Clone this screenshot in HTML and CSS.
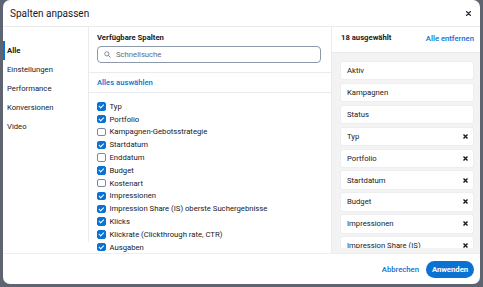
FILE: index.html
```html
<!DOCTYPE html>
<html lang="de">
<head>
    <meta charset="UTF-8">
    <title>Spalten anpassen</title>
    <link rel="stylesheet" href="styles.css">
</head>
<body>
    <div class="modal">
        <div class="modal_head">
            <span class="title">Spalten anpassen</span>
            <svg class="close" width="5" height="5" viewBox="0 0 10 10"><path d="M1 1l8 8M9 1l-8 8" stroke="#2a2e33" stroke-width="2.2" stroke-linecap="round"/></svg>
        </div>
        <div class="modal_body">
            <div class="nav">
                <div class="nav_item active">Alle</div>
                <div class="nav_item">Einstellungen</div>
                <div class="nav_item">Performance</div>
                <div class="nav_item">Konversionen</div>
                <div class="nav_item">Video</div>
            </div>
            <div class="available">
                <div class="avail_head">
                    <div class="label">Verfügbare Spalten</div>
                    <div class="search">
                        <svg width="7" height="7" viewBox="0 0 16 16"><circle cx="6.5" cy="6.5" r="4.8" fill="none" stroke="#7d8998" stroke-width="2.2"/><path d="M10 10l4.5 4.5" stroke="#7d8998" stroke-width="2.2" stroke-linecap="round"/></svg>
                        <span>Schnellsuche</span>
                    </div>
                </div>
                <div class="select_all">Alles auswählen</div>
                <div class="check_list">
                    <div class="check_row"><span class="box on"></span>Typ</div>
                    <div class="check_row"><span class="box on"></span>Portfolio</div>
                    <div class="check_row"><span class="box"></span>Kampagnen-Gebotsstrategie</div>
                    <div class="check_row"><span class="box on"></span>Startdatum</div>
                    <div class="check_row"><span class="box"></span>Enddatum</div>
                    <div class="check_row"><span class="box on"></span>Budget</div>
                    <div class="check_row"><span class="box"></span>Kostenart</div>
                    <div class="check_row"><span class="box on"></span>Impressionen</div>
                    <div class="check_row"><span class="box on"></span>Impression Share (IS) oberste Suchergebnisse</div>
                    <div class="check_row"><span class="box on"></span>Klicks</div>
                    <div class="check_row"><span class="box on"></span>Klickrate (Clickthrough rate, CTR)</div>
                    <div class="check_row"><span class="box on"></span>Ausgaben</div>
                </div>
            </div>
            <div class="selected">
                <div class="sel_head">
                    <span class="label">18 ausgewählt</span>
                    <span class="link">Alle entfernen</span>
                </div>
                <div class="sel_list">
                    <div class="card">Aktiv</div>
                    <div class="card">Kampagnen</div>
                    <div class="card">Status</div>
                    <div class="card">Typ <svg class="x" width="5" height="5" viewBox="0 0 10 10"><path d="M1 1l8 8M9 1l-8 8" stroke="#16191f" stroke-width="2.8"/></svg></div>
                    <div class="card">Portfolio <svg class="x" width="5" height="5" viewBox="0 0 10 10"><path d="M1 1l8 8M9 1l-8 8" stroke="#16191f" stroke-width="2.8"/></svg></div>
                    <div class="card">Startdatum <svg class="x" width="5" height="5" viewBox="0 0 10 10"><path d="M1 1l8 8M9 1l-8 8" stroke="#16191f" stroke-width="2.8"/></svg></div>
                    <div class="card">Budget <svg class="x" width="5" height="5" viewBox="0 0 10 10"><path d="M1 1l8 8M9 1l-8 8" stroke="#16191f" stroke-width="2.8"/></svg></div>
                    <div class="card">Impressionen <svg class="x" width="5" height="5" viewBox="0 0 10 10"><path d="M1 1l8 8M9 1l-8 8" stroke="#16191f" stroke-width="2.8"/></svg></div>
                    <div class="card">Impression Share (IS) <svg class="x" width="5" height="5" viewBox="0 0 10 10"><path d="M1 1l8 8M9 1l-8 8" stroke="#16191f" stroke-width="2.8"/></svg></div>
                </div>
            </div>
        </div>
        <div class="modal_foot">
            <span class="link">Abbrechen</span>
            <button class="apply">Anwenden</button>
        </div>
    </div>
</body>
</html>
```

FILE: styles.css
```css
body { margin: 0; background: #5e6570; font-family: Roboto, sans-serif; font-size: 7.7px; color: #16191f; }
.modal { margin: 0 3px; width: 477px; height: 284px; background: #fff; border-radius: 7px; display: flex; flex-direction: column; overflow: hidden; }
.modal_head { height: 26px; flex: none; display: flex; align-items: center; justify-content: space-between; padding: 0 9px 0 7px; border-bottom: 1px solid #e9ebed; }
.title { font-size: 10px; }
.modal_body { height: 226px; flex: none; display: grid; grid-template-columns: 86px 243px 1fr; border-bottom: 1px solid #eceeef; }
.nav { padding-top: 14px; border-right: 1px solid #e9ebed; margin-bottom: 11px; }
.nav_item { height: 19px; line-height: 19px; padding-left: 2px; border-left: 2px solid transparent; white-space: nowrap; }
.nav_item.active { font-weight: 700; border-left-color: #0972d3; }
.available { display: flex; flex-direction: column; overflow: hidden; border-right: 1px solid #e9ebed; }
.avail_head { padding: 6px 10px 9px 8px; border-bottom: 1px solid #e9ebed; }
.label { font-weight: 700; white-space: nowrap; line-height: 10px; }
.search { margin-top: 3px; height: 15px; border: 1px solid #8d99a8; border-radius: 4px; display: flex; align-items: center; gap: 5px; padding-left: 6px; color: #5f6b7a; }
.select_all { height: 19px; line-height: 19px; padding-left: 8px; color: #0972d3; font-weight: 500; border-bottom: 1px solid #e9ebed; }
.check_list { padding: 7px 0 0 8px; }
.check_row { height: 12.8px; display: flex; align-items: center; gap: 4px; white-space: nowrap; }
.box { width: 6.5px; height: 6.5px; border: 1px solid #7d8998; border-radius: 2px; flex: none; }
.box.on { background: #0972d3; border-color: #0972d3; position: relative; }
.box.on::after { content: ""; position: absolute; left: 2px; top: 0; width: 1.6px; height: 3.8px; border: solid #fff; border-width: 0 1.3px 1.3px 0; transform: rotate(45deg); }
.selected { display: flex; flex-direction: column; overflow: hidden; background: #f3f3f3; padding-bottom: 5px; }
.sel_head { height: 22px; padding: 0 6px 3px 9px; flex: none; background: #fff; display: flex; align-items: center; justify-content: space-between; border-bottom: 1px solid #e9ebed; white-space: nowrap; }
.link { color: #0972d3; font-weight: 500; white-space: nowrap; }
.sel_list { flex: 1; min-height: 0; overflow: hidden; padding: 9px 7px 0 9px; display: flex; flex-direction: column; gap: 4.6px; }
.card { height: 17.3px; flex: none; background: #fff; border-radius: 2px; box-shadow: 0 0 0 1px #eceeef; display: flex; align-items: center; justify-content: space-between; padding: 0 5px 0 6px; white-space: nowrap; }
.modal_foot { height: 30px; flex: none; display: flex; align-items: center; justify-content: flex-end; gap: 7px; padding-right: 6px; }
.apply { height: 17px; width: 48px; padding: 0; border: none; border-radius: 9px; background: #0972d3; color: #fff; font-family: inherit; font-size: 7.7px; font-weight: 700; }
```
